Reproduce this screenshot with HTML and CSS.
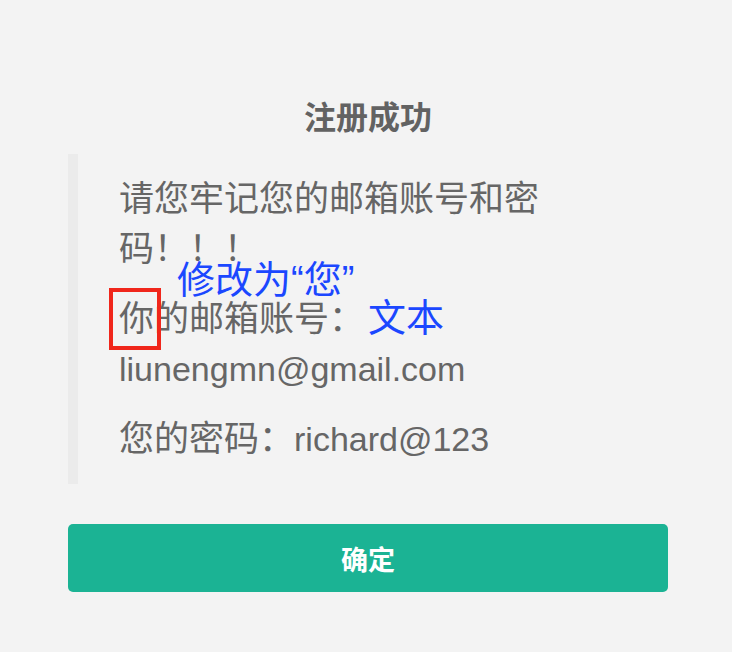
FILE: index.html
```html
<!DOCTYPE html>
<html lang="zh-CN">
<head>
<meta charset="utf-8">
<title>注册成功</title>
<link rel="stylesheet" href="styles.css">
</head>
<body>
<div class="dialog">
  <h1 class="title">注册成功</h1>
  <div class="quote">
    <p class="para">请您牢记您的邮箱账号和密码！！！</p>
    <p class="para">你的邮箱账号：<span class="latin">liunengmn@gmail.com</span></p>
    <p class="para">您的密码：<span class="latin">richard@123</span></p>
    <div class="mark-box"></div>
    <span class="note note-fix">修改为“您”</span>
    <span class="note note-text">文本</span>
  </div>
  <button class="btn" type="button">确定</button>
</div>
</body>
</html>
```

FILE: styles.css
```css
html, body {
  margin: 0;
  padding: 0;
  background: #f3f3f3;
}

body {
  font-family: "Liberation Sans", "Noto Sans CJK SC", sans-serif;
  color: #666666;
}

.dialog {
  width: 600px;
  margin-left: 68px;
  padding-top: 98px;
  display: flex;
  flex-direction: column;
}

.title {
  margin: 0 0 16px;
  font-size: 32px;
  line-height: 40px;
  font-weight: bold;
  text-align: center;
  color: #626262;
}

.quote {
  position: relative;
  border-left: 10px solid #ebebeb;
  padding: 20px 0 20px 41px;
  display: flex;
  flex-direction: column;
  gap: 20px;
}

.para {
  margin: 0;
  max-width: 440px;
  font-size: 35px;
  line-height: 50px;
}

.latin {
  font-size: 34px;
}

.mark-box {
  position: absolute;
  left: 31px;
  top: 134px;
  width: 44px;
  height: 54px;
  border: 4px solid #f0261b;
}

.note {
  position: absolute;
  font-size: 38px;
  line-height: 38px;
  color: #1b47ff;
  white-space: nowrap;
}

.note-fix {
  left: 99px;
  top: 107px;
}

.note-text {
  left: 290px;
  top: 145px;
}

.btn {
  margin-top: 40px;
  height: 68px;
  border: none;
  border-radius: 5px;
  background: #1bb394;
  color: #ffffff;
  font-family: "Liberation Sans", "Noto Sans CJK SC", sans-serif;
  font-size: 27px;
  font-weight: bold;
  padding: 0;
}
```
